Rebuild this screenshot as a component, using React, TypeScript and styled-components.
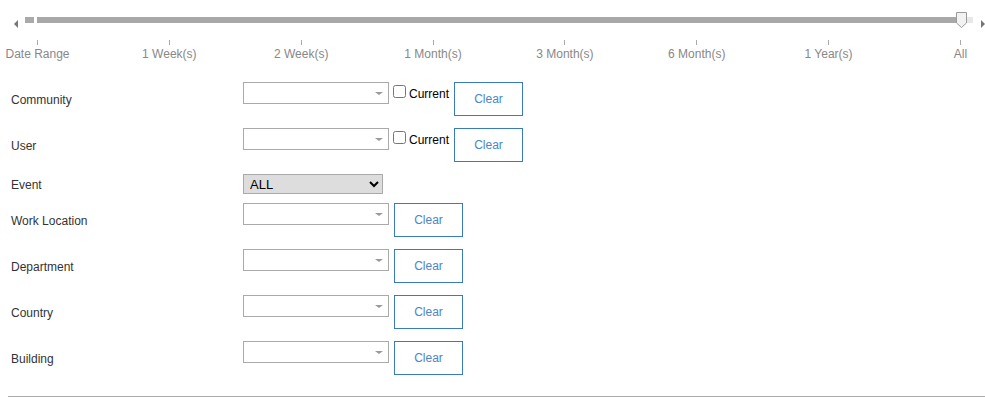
import styled, { createGlobalStyle } from "styled-components";

const GlobalStyle = createGlobalStyle`
  html, body {
    margin: 0;
    padding: 0;
    background: #fff;
  }
  body {
    font-family: "Liberation Sans", Arial, sans-serif;
    font-size: 12px;
    color: #333;
  }
`;

const ranges = [
  "Date Range",
  "1 Week(s)",
  "2 Week(s)",
  "1 Month(s)",
  "3 Month(s)",
  "6 Month(s)",
  "1 Year(s)",
  "All",
];

type FilterRow = {
  label: string;
};

const upperRows: FilterRow[] = [{ label: "Community" }, { label: "User" }];

const lowerRows: FilterRow[] = [
  { label: "Work Location" },
  { label: "Department" },
  { label: "Country" },
  { label: "Building" },
];

function App() {
  return (
    <Page>
      <GlobalStyle />
      <SliderBar>
        <ArrowLeft />
        <Track>
          <StartBlock />
          <FillBar>
            <Handle>
              <svg width="11" height="16" viewBox="0 0 11 16">
                <path
                  d="M0.5 0.5 H10.5 V11 L5.5 15.5 L0.5 11 Z"
                  fill="#f2f2f2"
                  stroke="#9a9a9a"
                  strokeWidth="1"
                />
              </svg>
            </Handle>
          </FillBar>
          <RestBar />
        </Track>
        <ArrowRight />
      </SliderBar>

      <Ticks>
        {ranges.map((r) => (
          <Tick key={r}>
            <TickMark />
            <TickLabel>{r}</TickLabel>
          </Tick>
        ))}
      </Ticks>

      <Form>
        {upperRows.map((row) => (
          <Row key={row.label} $gap={12}>
            <Label>{row.label}</Label>
            <Controls>
              <FakeSelect>
                <Caret />
              </FakeSelect>
              <CurrentBox>
                <input type="checkbox" />
                <span>Current</span>
              </CurrentBox>
              <ClearBtn>Clear</ClearBtn>
            </Controls>
          </Row>
        ))}
        <Row $gap={9}>
          <Label>Event</Label>
          <Controls>
            <EventSelect defaultValue="ALL">
              <option value="ALL">ALL</option>
            </EventSelect>
          </Controls>
        </Row>
        {lowerRows.map((row) => (
          <Row key={row.label} $gap={12}>
            <Label>{row.label}</Label>
            <Controls>
              <FakeSelect>
                <Caret />
              </FakeSelect>
              <ClearBtn>Clear</ClearBtn>
            </Controls>
          </Row>
        ))}
      </Form>

      <Divider />
    </Page>
  );
}

export default App;

const Page = styled.div`
  width: 985px;
  height: 398px;
  overflow: hidden;
  padding-left: 8px;
  box-sizing: border-box;
`;

const SliderBar = styled.div`
  display: flex;
  align-items: flex-start;
  height: 28px;
  padding-top: 12px;
  box-sizing: border-box;
`;

const ArrowLeft = styled.div`
  width: 0;
  height: 0;
  margin: 8px 7px 0 6px;
  border-top: 4px solid transparent;
  border-bottom: 4px solid transparent;
  border-right: 4px solid #777;
`;

const ArrowRight = styled.div`
  width: 0;
  height: 0;
  margin: 8px 0 0 8px;
  border-top: 4px solid transparent;
  border-bottom: 4px solid transparent;
  border-left: 4px solid #777;
`;

const Track = styled.div`
  display: flex;
  align-items: flex-start;
  padding-top: 5px;
`;

const StartBlock = styled.div`
  width: 9px;
  height: 6px;
  background: #aaa;
  margin-right: 3px;
`;

const FillBar = styled.div`
  position: relative;
  width: 924px;
  height: 6px;
  background: #a8a8a8;
`;

const RestBar = styled.div`
  width: 12px;
  height: 6px;
  background: #e8e8e8;
`;

const Handle = styled.div`
  position: absolute;
  right: -6px;
  top: -5px;
  width: 11px;
  height: 16px;
  line-height: 0;
`;

const Ticks = styled.div`
  display: flex;
  justify-content: space-between;
  width: 924px;
  margin-left: 29px;
  margin-top: 12px;
  height: 25px;
`;

const Tick = styled.div`
  width: 1px;
  display: flex;
  flex-direction: column;
  align-items: center;
`;

const TickMark = styled.div`
  width: 1px;
  height: 5px;
  background: #aaa;
`;

const TickLabel = styled.div`
  white-space: nowrap;
  color: #888;
  font-size: 12px;
  line-height: 14px;
  margin-top: 2px;
`;

const Form = styled.div`
  display: flex;
  flex-direction: column;
  margin-top: 17px;
`;

const Row = styled.div<{ $gap: number }>`
  display: flex;
  align-items: center;
  margin-bottom: ${(p) => p.$gap}px;
`;

const Label = styled.div`
  width: 235px;
  padding-left: 3px;
  box-sizing: border-box;
  font-size: 12px;
  color: #333;
  line-height: 14px;
  padding-top: 2px;
`;

const Controls = styled.div`
  display: flex;
  align-items: flex-start;
`;

const FakeSelect = styled.div`
  position: relative;
  width: 146px;
  height: 22px;
  box-sizing: border-box;
  border: 1px solid #aaa;
  background: #fff;
`;

const Caret = styled.div`
  position: absolute;
  right: 5px;
  top: 9px;
  width: 0;
  height: 0;
  border-left: 4px solid transparent;
  border-right: 4px solid transparent;
  border-top: 3px solid #999;
`;

const CurrentBox = styled.label`
  display: flex;
  align-items: flex-start;
  margin-left: 4px;
  margin-top: 3px;
  font-size: 12px;
  color: #000;

  input {
    width: 13px;
    height: 13px;
    margin: 0 3px 0 0;
  }

  span {
    line-height: 14px;
    margin-top: 2px;
  }
`;

const ClearBtn = styled.button`
  width: 69px;
  height: 34px;
  margin-left: 5px;
  background: #fff;
  border: 1px solid #3a7abf;
  color: #4a86c8;
  font-family: "Liberation Sans", Arial, sans-serif;
  font-size: 12px;
  padding: 0;
  cursor: pointer;
`;

const EventSelect = styled.select`
  width: 140px;
  height: 20px;
  background-color: #ddd;
  border: 1px solid #aaa;
  font-family: "Liberation Sans", Arial, sans-serif;
  font-size: 13px;
  color: #000;
  padding: 0 2px;
`;

const Divider = styled.div`
  margin-top: 9px;
  width: 977px;
  height: 1px;
  background: #aaa;
`;
